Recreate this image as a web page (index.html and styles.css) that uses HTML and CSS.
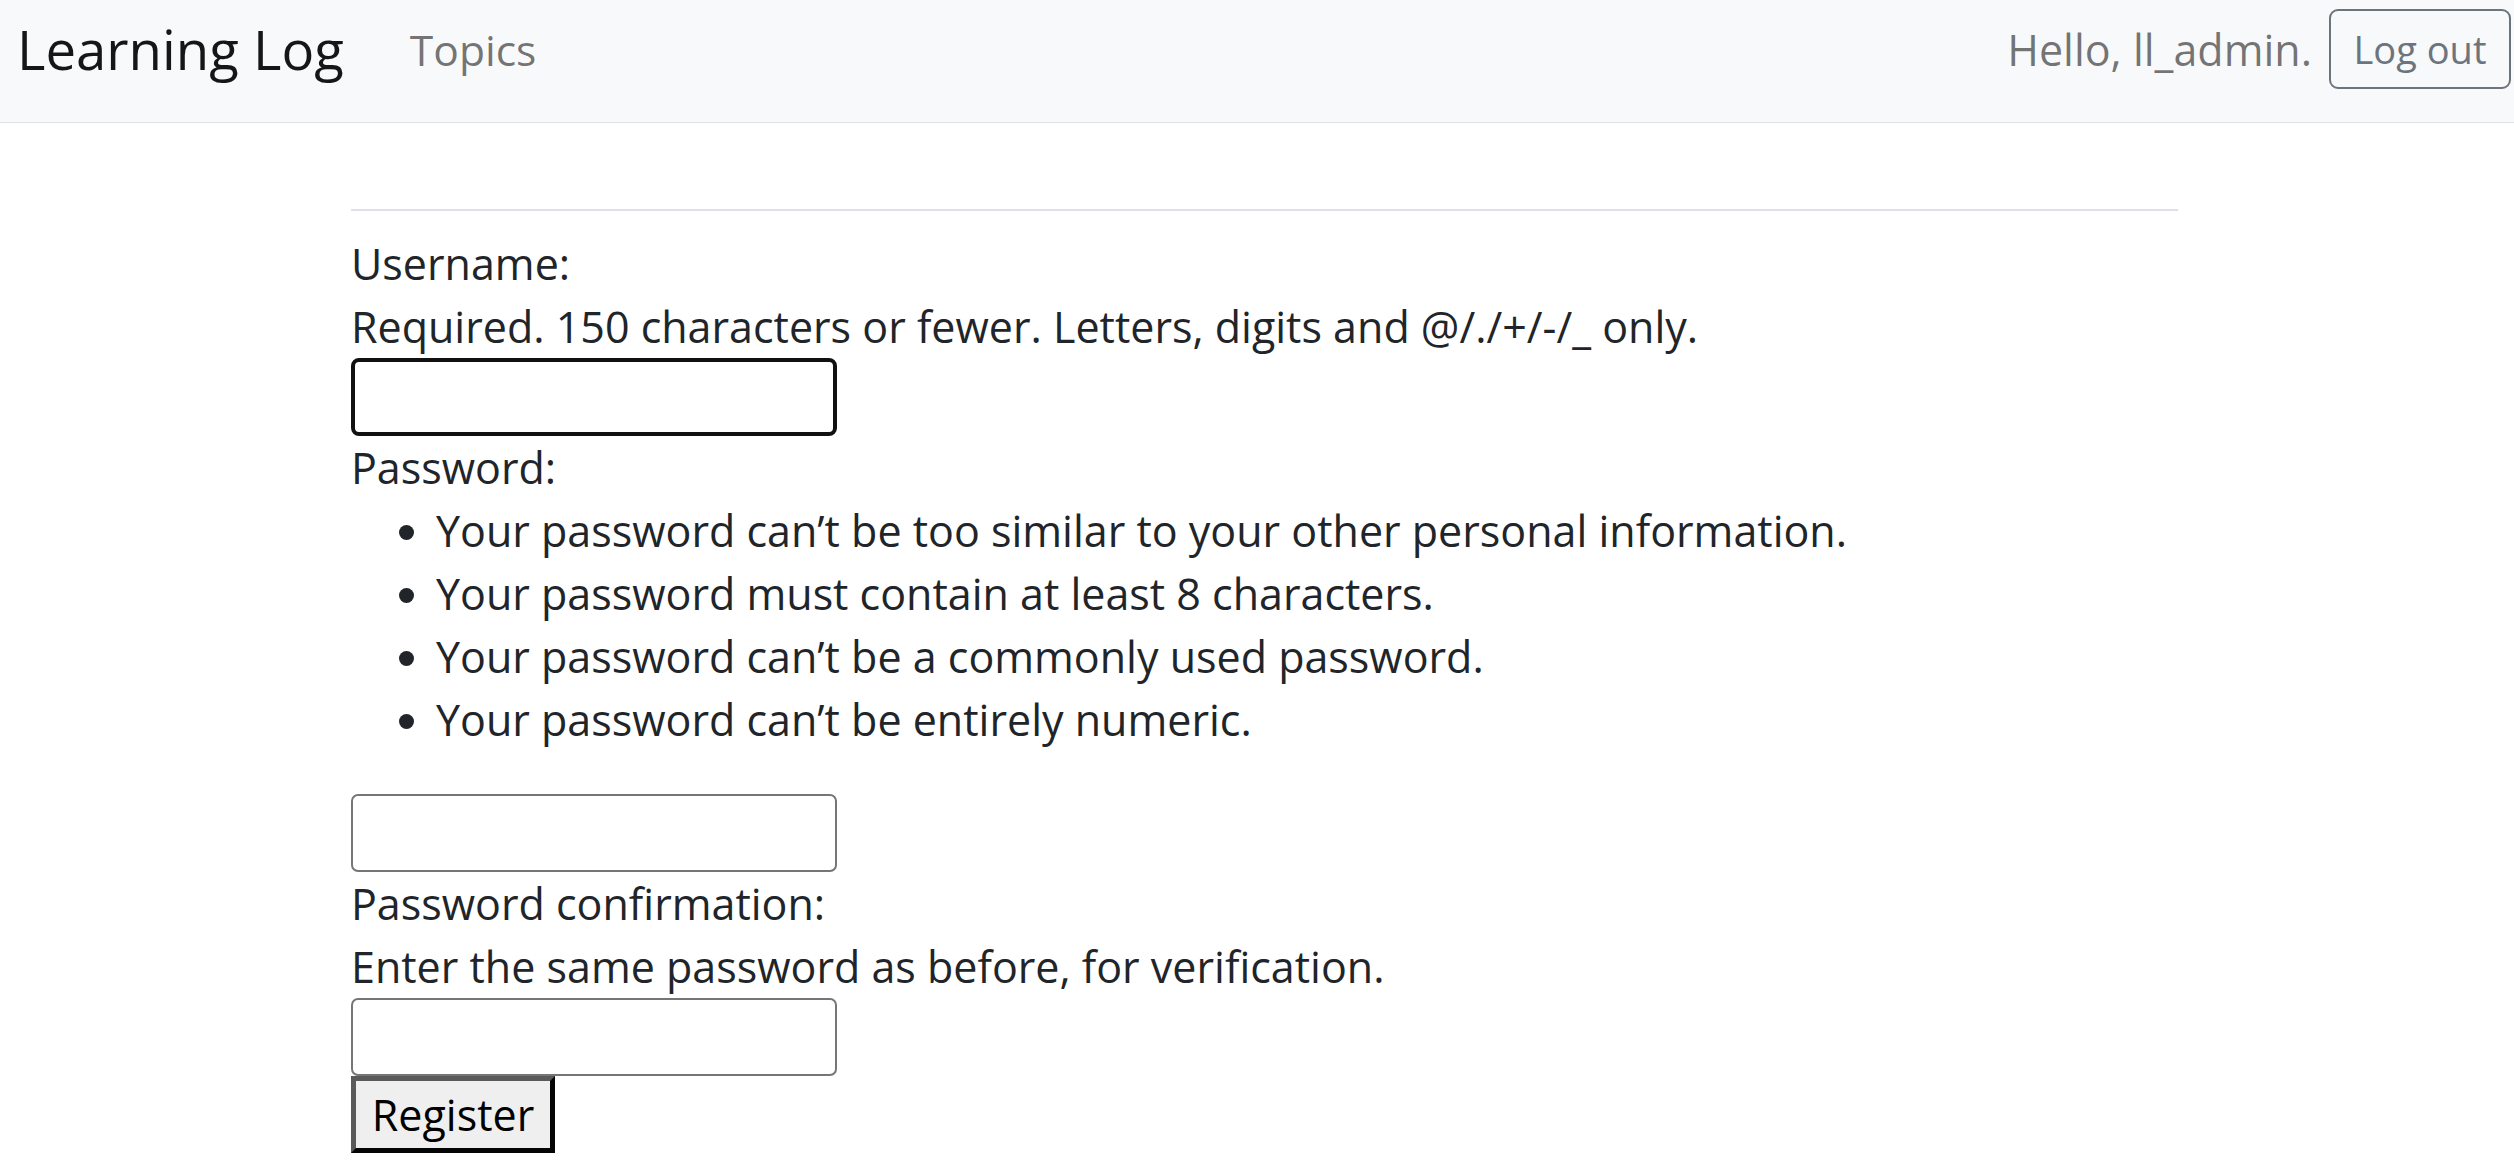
FILE: index.html
```html
<!DOCTYPE html>
<html lang="en">
<head>
<meta charset="utf-8">
<title>Learning Log</title>
<link rel="stylesheet" href="styles.css">
</head>
<body>
<nav class="navbar">
  <div class="nav-row">
    <a class="brand" href="#">Learning Log</a>
    <a class="nav-link" href="#">Topics</a>
    <div class="nav-right">
      <span class="nav-text">Hello, ll_admin.</span>
      <button class="btn-logout" type="button">Log out</button>
    </div>
  </div>
</nav>
<main class="container">
  <div class="page-header"></div>
  <form class="form">
    <p class="line">Username:</p>
    <p class="line">Required. 150 characters or fewer. Letters, digits and @/./+/-/_ only.</p>
    <input class="field field-focus" type="text">
    <p class="line">Password:</p>
    <ul class="help">
      <li>Your password can’t be too similar to your other personal information.</li>
      <li>Your password must contain at least 8 characters.</li>
      <li>Your password can’t be a commonly used password.</li>
      <li>Your password can’t be entirely numeric.</li>
    </ul>
    <input class="field" type="password">
    <p class="line">Password confirmation:</p>
    <p class="line">Enter the same password as before, for verification.</p>
    <input class="field" type="password">
    <button class="btn-register" type="button">Register</button>
  </form>
</main>
</body>
</html>
```
FILE: styles.css
```css
html, body {
  margin: 0;
  padding: 0;
  background: #fff;
}
body {
  font-family: "Open Sans", "Noto Sans", sans-serif;
  font-size: 43px;
  line-height: 63px;
  color: #212529;
}
.navbar {
  height: 122px;
  background: #f8f9fa;
  border-bottom: 1px solid #dee2e6;
}
.nav-row {
  display: flex;
  align-items: center;
  height: 80px;
  padding: 9px 3px 0 17px;
}
.brand {
  font-size: 54.5px;
  line-height: 1;
  color: #161616;
  text-decoration: none;
  margin-right: 66px;
}
.nav-link {
  font-size: 42.6px;
  color: rgba(0, 0, 0, 0.55);
  text-decoration: none;
  line-height: 1;
}
.nav-right {
  margin-left: auto;
  display: flex;
  align-items: center;
  gap: 17px;
}
.nav-text {
  color: rgba(0, 0, 0, 0.55);
  line-height: 1;
}
.btn-logout {
  font-family: inherit;
  font-size: 38px;
  line-height: 1;
  color: #6c757d;
  background: transparent;
  border: 2px solid #6c757d;
  border-radius: 9px;
  width: 182px;
  height: 80px;
  padding: 0;
}
.container {
  width: 1827px;
  margin-left: 351px;
  padding-top: 86px;
}
.page-header {
  height: 0;
  border-top: 2px solid #dee2e6;
  margin-bottom: 21px;
}
.form {
  display: flex;
  flex-direction: column;
  align-items: flex-start;
}
.line {
  margin: 0;
}
.field {
  box-sizing: border-box;
  width: 486px;
  height: 78px;
  margin: 0;
  border: 2px solid #767676;
  border-radius: 7px;
  background: #fff;
  font-family: inherit;
  font-size: 36px;
  padding: 0 8px;
}
.field-focus {
  border: 4px solid #111;
  border-radius: 8px;
}
.help {
  margin: 0 0 43px;
  padding-left: 85px;
}
.btn-register {
  box-sizing: border-box;
  width: 204px;
  height: 77px;
  margin: 0;
  padding: 0;
  font-family: inherit;
  font-size: 43px;
  line-height: 1;
  color: #000;
  background: #efefef;
  border-style: solid;
  border-width: 5px;
  border-color: #5a5a5a #050505 #050505 #5a5a5a;
}
```
